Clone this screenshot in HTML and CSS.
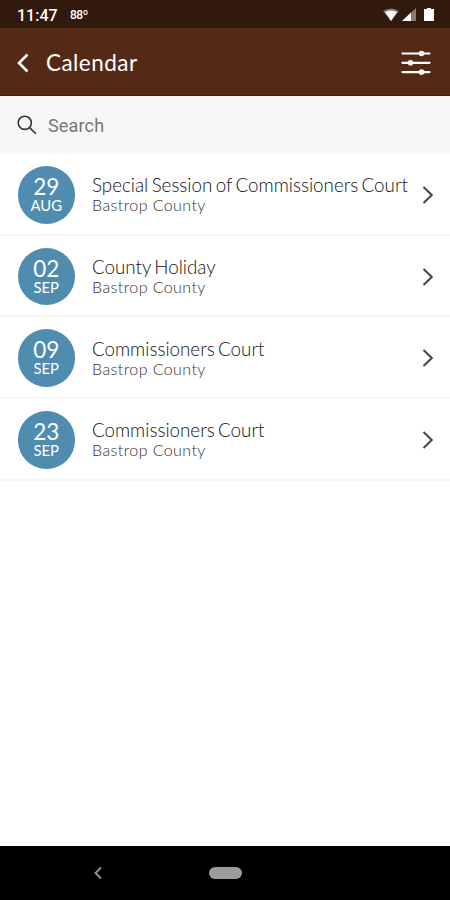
FILE: index.html
```html
<!DOCTYPE html>
<html lang="en">
<head>
    <meta charset="UTF-8">
    <meta name="viewport" content="width=device-width, initial-scale=1.0">
    <title>Calendar</title>
    <link rel="stylesheet" href="styles.css">
</head>
<body>
    <div class="status-bar">
        <span class="time">11:47</span>
        <span class="temp">88º</span>
        <svg class="status-icons" width="54" height="16" viewBox="0 0 54 16">
            <path d="M1 4 Q9 -1 17 4 L9 14 Z" fill="#8d7a70"/>
            <path d="M3 5 Q9 2 15 5 L9 14 Z" fill="#fff"/>
            <path d="M34 1 V14 H20 Z" fill="#8d7a70"/>
            <path d="M29 5.6 V14 H20 Z" fill="#fff"/>
            <path d="M45 1 H49 V2 H52 V14 H42 V2 H45 Z" fill="#fff"/>
        </svg>
    </div>

    <header>
        <svg class="back" width="14" height="20" viewBox="0 0 14 20">
            <path d="M12.5 1.5 L4 10 L12.5 18.5"/>
        </svg>
        <h1>Calendar</h1>
        <svg class="filter" width="30" height="26" viewBox="0 0 30 26">
            <path d="M1.5 3.5 H28.5 M1.5 12.8 H28.5 M1.5 22.1 H28.5"/>
            <circle cx="20.5" cy="3.5" r="2.8"/>
            <circle cx="9.5" cy="12.8" r="2.8"/>
            <circle cx="20.5" cy="22.1" r="2.8"/>
        </svg>
    </header>

    <div class="search">
        <svg width="20" height="20" viewBox="0 0 20 20">
            <circle cx="7.8" cy="7.8" r="6.6"/>
            <path d="M12.6 12.6 L18.8 18.8"/>
        </svg>
        <input type="text" placeholder="Search">
    </div>

    <main class="events">
        <div class="event">
            <div class="date"><span class="day">29</span><span class="month">AUG</span></div>
            <div class="info">
                <div class="title">Special Session of Commissioners Court</div>
                <div class="place">Bastrop County</div>
            </div>
            <svg class="arrow" width="12" height="20" viewBox="0 0 12 20"><path d="M1.5 2 L9.8 10 L1.5 18"/></svg>
        </div>
        <div class="event">
            <div class="date"><span class="day">02</span><span class="month">SEP</span></div>
            <div class="info">
                <div class="title">County Holiday</div>
                <div class="place">Bastrop County</div>
            </div>
            <svg class="arrow" width="12" height="20" viewBox="0 0 12 20"><path d="M1.5 2 L9.8 10 L1.5 18"/></svg>
        </div>
        <div class="event">
            <div class="date"><span class="day">09</span><span class="month">SEP</span></div>
            <div class="info">
                <div class="title">Commissioners Court</div>
                <div class="place">Bastrop County</div>
            </div>
            <svg class="arrow" width="12" height="20" viewBox="0 0 12 20"><path d="M1.5 2 L9.8 10 L1.5 18"/></svg>
        </div>
        <div class="event">
            <div class="date"><span class="day">23</span><span class="month">SEP</span></div>
            <div class="info">
                <div class="title">Commissioners Court</div>
                <div class="place">Bastrop County</div>
            </div>
            <svg class="arrow" width="12" height="20" viewBox="0 0 12 20"><path d="M1.5 2 L9.8 10 L1.5 18"/></svg>
        </div>
    </main>

    <nav>
        <svg width="10" height="14" viewBox="0 0 10 14"><path d="M8 1.5 L2.5 7 L8 12.5"/></svg>
        <div class="home"></div>
    </nav>
</body>
</html>
```
FILE: styles.css
```css
* {
    box-sizing: border-box;
}
body {
    margin: 0;
    height: 900px;
    display: flex;
    flex-direction: column;
    font-family: Lato, 'Liberation Sans', sans-serif;
    background-color: #fff;
    color: #111;
    overflow: hidden;
}
svg {
    flex: none;
    fill: none;
}
/* Android status bar */
.status-bar {
    height: 28px;
    padding: 2px 14px 0 17px;
    display: flex;
    align-items: center;
    background-color: #31190d;
    color: #fff;
    font-family: Roboto, sans-serif;
}
.time {
    width: 53px;
    font-size: 16px;
    font-weight: 500;
}
.temp {
    font-size: 12px;
    font-weight: 500;
    letter-spacing: -0.5px;
}
.status-icons {
    margin-left: auto;
}
header {
    height: 68px;
    padding: 2px 19px 0 15px;
    display: flex;
    align-items: center;
    background-color: #542a17;
    border-bottom: 1px solid #442011;
    color: #fff;
}
.back {
    stroke: #fff;
    stroke-width: 2.6;
}
h1 {
    margin: 0 auto 0 17px;
    font-size: 22.5px;
    font-weight: 400;
    letter-spacing: 0.45px;
}
.filter {
    stroke: #fff;
    stroke-width: 2.2;
    stroke-linecap: round;
}
.filter circle {
    fill: #fff;
    stroke: none;
}
.search {
    height: 58px;
    padding: 0 17px;
    display: flex;
    align-items: center;
    background-color: #f7f7f7;
}
.search svg {
    stroke: #333;
    stroke-width: 1.6;
}
.search input {
    flex: 1;
    margin-left: 11px;
    padding: 1px 0 0;
    border: none;
    outline: none;
    background: none;
    font-family: Roboto, sans-serif;
    font-size: 18px;
    letter-spacing: 0.15px;
}
.search input::placeholder {
    color: #777;
}
.events {
    flex: 1;
}
.event {
    height: 81.7px;
    padding: 2px 16px 0 17.5px;
    display: flex;
    align-items: center;
    border-bottom: 2px solid #f5f5f5;
}
.date {
    width: 57.5px;
    height: 57.5px;
    padding-top: 9px;
    flex: none;
    border-radius: 50%;
    background-color: #508cb0;
    color: #fff;
    text-align: center;
}
.day,
.month {
    display: block;
}
.day {
    font-size: 22.5px;
    line-height: 23px;
}
.month {
    font-size: 14.8px;
    line-height: 14px;
}
.info {
    flex: 1;
    margin-left: 17px;
    white-space: nowrap;
}
.title {
    font-size: 18.8px;
    font-weight: 300;
    line-height: 20px;
    word-spacing: -1.7px;
}
.place {
    font-size: 16px;
    font-weight: 300;
    line-height: 19px;
    letter-spacing: 0.42px;
    color: #333;
}
.arrow {
    stroke: #444;
    stroke-width: 2;
}
/* Android navigation bar */
nav {
    height: 54px;
    padding-left: 93px;
    display: flex;
    align-items: center;
    background-color: #000;
}
nav svg {
    stroke: #999;
    stroke-width: 1.8;
}
.home {
    width: 33px;
    height: 12px;
    margin-left: 106px;
    border-radius: 6px;
    background-color: #9c9c9c;
}
```
